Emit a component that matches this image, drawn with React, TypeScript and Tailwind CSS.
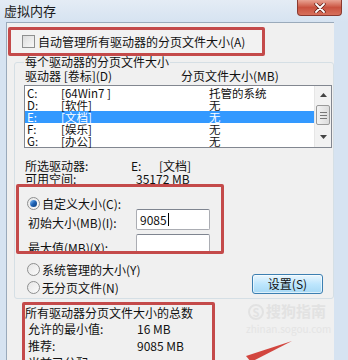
import React from "react";

const font = { fontFamily: '"Noto Sans CJK SC", "Noto Sans", sans-serif' };

const drives = [
  { letter: "C:", label: "[64Win7 ]", size: "托管的系统" },
  { letter: "D:", label: "[软件]", size: "无" },
  { letter: "E:", label: "[文档]", size: "无", selected: true },
  { letter: "F:", label: "[娱乐]", size: "无" },
  { letter: "G:", label: "[办公]", size: "无" },
];

const Radio = ({ checked }: { checked?: boolean }) => (
  <span className="flex h-[13px] w-[13px] shrink-0 items-center justify-center rounded-full border border-[#8e8f8f] bg-gradient-to-br from-[#e6e6e6] to-[#fbfbfb]">
    {checked && (
      <span className="h-[7px] w-[7px] rounded-full bg-gradient-to-br from-[#86c6ff] via-[#1f63b5] to-[#0d3d7a]" />
    )}
  </span>
);

const App = () => {
  return (
    <div
      className="relative h-[360px] w-[348px] overflow-hidden bg-[#d6e3f1] text-[12px] text-[#111]"
      style={font}
    >
      {/* title bar */}
      <div className="flex h-[22px] items-start justify-between bg-gradient-to-b from-[#e4ecf5] to-[#d6e3f1]">
        <span className="ml-[4px] mt-[3px] text-[13px] leading-[16px] text-[#1a1a1a]">虚拟内存</span>
        <div className="mr-[6px] flex h-[16px] w-[45px] items-center justify-center rounded-b-[4px] border border-t-0 border-[#8a3a30] bg-gradient-to-b from-[#e8a393] via-[#c9523f] to-[#d7705c]">
          <svg width="12" height="10" viewBox="0 0 12 10">
            <path d="M2 1 L10 9 M10 1 L2 9" stroke="#5a1a12" strokeWidth="3.2" strokeLinecap="round" />
            <path d="M2 1 L10 9 M10 1 L2 9" stroke="#fff" strokeWidth="1.8" strokeLinecap="round" />
          </svg>
        </div>
      </div>

      {/* dialog body */}
      <div className="ml-[6px] h-[338px] w-[328px] border-l border-t border-[#9aaabb] bg-[#f0f0f0]">
        {/* red box 1 */}
        <div className="relative z-10 ml-[1px] mt-[4px] flex h-[29px] w-[257px] items-center rounded-[2px] border-[3px] border-[#c44a4a] bg-[#f2f2f2] pl-[11px]">
          <span className="h-[13px] w-[13px] border border-[#8e8f8f] bg-gradient-to-br from-[#dcdcdc] to-[#f8f8f8]" />
          <span className="ml-[3px] leading-[14px]">自动管理所有驱动器的分页文件大小(A)</span>
        </div>

        {/* group: per drive */}
        <div className="ml-[7px] mt-[6px] w-[320px] rounded-[3px] border border-[#d5dfe5] pb-[4px]">
          <div className="-mt-[8px] ml-[9px] w-fit bg-[#f0f0f0] px-[1px] leading-[14px]">每个驱动器的分页文件大小</div>
          <div className="flex pl-[10px] leading-[13px]">
            <span className="w-[156px]">驱动器 [卷标](D)</span>
            <span>分页文件大小(MB)</span>
          </div>

          {/* list */}
          <div className="ml-[9px] mt-[3px] flex h-[63px] w-[308px] border border-[#828790] bg-white">
            <div className="flex-1 pt-[1px]">
              {drives.map((d) => (
                <div
                  key={d.letter}
                  className={`flex h-[12px] items-center pl-[2px] text-[11.5px] leading-[12px] ${
                    d.selected ? "bg-[#3399ff] text-white" : ""
                  }`}
                >
                  <span className="w-[34px]">{d.letter}</span>
                  <span className="w-[148px]">{d.label}</span>
                  <span>{d.size}</span>
                </div>
              ))}
            </div>
            <div className="flex w-[17px] flex-col items-center border-l border-[#e6e6e6] bg-[#f2f2f2]">
              <svg width="7" height="4" viewBox="0 0 7 4" className="mt-[7px]">
                <path d="M0 4 L3.5 0 L7 4 Z" fill="#444" />
              </svg>
              <div className="mt-[8px] flex h-[20px] w-[14px] flex-col items-center justify-center gap-[2px] rounded-[2px] border border-[#9a9a9a] bg-gradient-to-r from-[#f3f3f3] to-[#dcdcdc]">
                <span className="h-px w-[7px] bg-[#777]" />
                <span className="h-px w-[7px] bg-[#777]" />
                <span className="h-px w-[7px] bg-[#777]" />
              </div>
              <svg width="7" height="4" viewBox="0 0 7 4" className="mt-[10px]">
                <path d="M0 0 L3.5 4 L7 0 Z" fill="#444" />
              </svg>
            </div>
          </div>

          {/* selected drive info */}
          <div className="mt-[11px] flex pl-[10px] leading-[13px]">
            <span className="w-[106px]">所选驱动器:</span>
            <span className="w-[28px]">E:</span>
            <span>[文档]</span>
          </div>
          <div className="flex pl-[10px] leading-[14px]">
            <span className="w-[111px]">可用空间:</span>
            <span>35172 MB</span>
          </div>

          {/* red box 2 */}
          <div className="relative z-10 ml-[1px] -mt-[2px] h-[70px] w-[208px] overflow-hidden rounded-[2px] border-[3px] border-[#c44a4a] bg-[#f0f0f0] pt-[10px]">
            <div className="flex h-[12px] items-center pl-[8px]">
              <Radio checked />
              <span className="ml-[2px] leading-[13px]">自定义大小(C):</span>
            </div>
            <div className="flex items-center pl-[9px]">
              <span className="mt-[5px] w-[108px] leading-[13px]">初始大小(MB)(I):</span>
              <div className="flex h-[21px] w-[74px] items-center rounded-[2px] border border-[#abadb3] border-t-[#7f8590] bg-white pl-[3px] leading-[13px]">
                9085<span className="ml-[1px] h-[13px] w-px bg-black" />
              </div>
            </div>
            <div className="mt-[4px] flex items-center pl-[9px]">
              <span className="mt-[5px] w-[108px] leading-[13px]">最大值(MB)(X):</span>
              <div className="h-[21px] w-[74px] rounded-[2px] border border-[#abadb3] border-t-[#7f8590] bg-white" />
            </div>
          </div>

          {/* other options + button */}
          <div className="mt-[8px] flex items-end justify-between pl-[12px] pr-[10px]">
            <div>
              <div className="flex h-[14px] items-center">
                <Radio />
                <span className="ml-[2px] leading-[13px]">系统管理的大小(Y)</span>
              </div>
              <div className="mt-[4px] flex h-[14px] items-center">
                <Radio />
                <span className="ml-[2px] leading-[13px]">无分页文件(N)</span>
              </div>
            </div>
            <button className="h-[20px] w-[71px] rounded-[3px] border border-[#3c7fb1] bg-gradient-to-b from-[#eaf6fd] via-[#bee6fd] to-[#a7d9f5] leading-[16px] text-[#111] shadow-[inset_0_0_0_1px_#ffffff99]">
              设置(S)
            </button>
          </div>
        </div>

        {/* red box 3 */}
        <div className="relative z-10 ml-[15px] mt-[3px] h-[70px] w-[193px] rounded-[2px] border-[3px] border-[#c44a4a] bg-[#f0f0f0] pt-[1px]">
          <div className="leading-[14px]">所有驱动器分页文件大小的总数</div>
          <div className="mt-[2px] flex pl-[3px] leading-[14px]">
            <span className="w-[109px]">允许的最小值:</span>
            <span>16 MB</span>
          </div>
          <div className="mt-[3px] flex pl-[3px] leading-[14px]">
            <span className="w-[109px]">推荐:</span>
            <span>9085 MB</span>
          </div>
          <div className="mt-[3px] flex pl-[3px] leading-[14px]">
            <span className="w-[109px]">当前已分配:</span>
          </div>
        </div>
      </div>

      {/* watermark */}
      <div className="absolute left-[248px] top-[302px] text-[15px] font-bold leading-[18px] text-[#e2e2e2]">
        <span className="mr-[2px] inline-flex h-[16px] w-[16px] items-center justify-center rounded-full border-2 border-[#e2e2e2] text-[11px]">S</span>
        搜狗指南
      </div>
      <div className="absolute left-[246px] top-[323px] text-[10px] leading-[12px] text-[#e4e4e4]">zhinan.sogou.com</div>

      {/* red arrow */}
      <svg className="absolute left-0 top-0" width="348" height="360" viewBox="0 0 348 360">
        <polygon points="292,341 246,356 251,362" fill="#d2463f" />
      </svg>
    </div>
  );
};

export default App;
